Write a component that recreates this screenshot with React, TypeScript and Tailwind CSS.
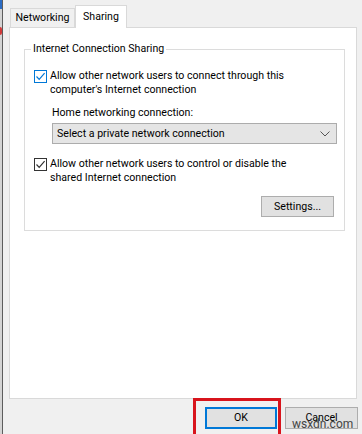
import React from 'react';

const font = { fontFamily: 'Roboto, "Liberation Sans", Arial, sans-serif' };

const CheckBox: React.FC<{ focused?: boolean }> = ({ focused }) => (
  <span
    className={`w-[13px] h-[13px] shrink-0 border bg-white flex items-center justify-center ${
      focused ? 'border-[#0078d7]' : 'border-[#333333]'
    }`}
  >
    <svg width="11" height="11" viewBox="0 0 11 11" fill="none">
      <path
        d="M1.5 5.5 L4.2 8.3 L9.6 2.2"
        stroke={focused ? '#0078d7' : '#333333'}
        strokeWidth="1.2"
      />
    </svg>
  </span>
);

const App: React.FC = () => {
  return (
    <div
      className="relative w-[362px] h-[434px] overflow-hidden bg-[#f0f0f0] text-[10.6px] text-black flex"
      style={font}
    >
      {/* edge of the window behind */}
      <div className="w-[2px] flex flex-col bg-[#d4d4d4]">
        <div className="h-[9px] bg-[#2b6cc4]" />
        <div className="h-[18px]" />
        <div className="h-[8px] bg-[#d23a3a] rounded-r-full" />
      </div>
      <div className="w-px bg-[#5d5d5d]" />

      <div className="flex-1 flex flex-col pl-[6px] pr-[5px]">
        {/* tabs */}
        <div className="relative z-10 flex items-end h-[28px] pl-px -mb-px">
          <div className="h-[19px] w-[65px] mb-px border border-b-0 border-[#d9d9d9] bg-[#f0f0f0] flex items-center justify-center">
            Networking
          </div>
          <div className="h-[23px] w-[52px] border border-b-0 border-[#d9d9d9] bg-white flex items-start justify-center pt-[3px]">
            Sharing
          </div>
        </div>

        {/* panel */}
        <div className="h-[372px] border border-[#d9d9d9] bg-white pt-[21px] pl-[14px] pr-[11px]">
          <div className="relative border border-[#dcdcdc] h-[182px] pt-[20px] pl-[9px] pr-[7px]">
            <span className="absolute -top-[8px] left-[6px] bg-white px-[2px] leading-[14px]">
              Internet Connection Sharing
            </span>

            <div className="flex gap-[3px]">
              <CheckBox focused />
              <div className="leading-[14px] -mt-px">
                Allow other network users to connect through this
                <br />
                computer's Internet connection
              </div>
            </div>

            <div className="pl-[18px] mt-[9px]">
              <div className="leading-[14px]">Home networking connection:</div>
              <div className="mt-[3px] h-[21px] border border-[#acacac] bg-[#e5e5e5] flex items-center justify-between pl-[4px] pr-[6px]">
                <span>Select a private network connection</span>
                <svg width="10" height="6" viewBox="0 0 10 6" fill="none">
                  <path d="M0.5 0.5 L5 5 L9.5 0.5" stroke="#555555" strokeWidth="1" />
                </svg>
              </div>
            </div>

            <div className="flex gap-[3px] mt-[14px]">
              <CheckBox />
              <div className="leading-[14px] -mt-px">
                Allow other network users to control or disable the
                <br />
                shared Internet connection
              </div>
            </div>

            <div className="flex justify-end mt-[11px] pr-[3px]">
              <button className="w-[73px] h-[21px] border border-[#adadad] bg-[#e1e1e1] flex items-center justify-center">
                Settings...
              </button>
            </div>
          </div>
        </div>

        {/* dialog buttons */}
        <div className="flex justify-end gap-[8px] pt-[8px] -mr-[1px]">
          <button className="w-[72px] h-[22px] border-2 border-[#0078d7] bg-[#e1e1e1] flex items-center justify-center">
            OK
          </button>
          <button className="relative w-[73px] h-[22px] border border-[#adadad] bg-[#e1e1e1] flex items-center justify-center">
            Cancel
            <span className="absolute left-[6px] top-[10px] text-[12px] text-[#444444] leading-none">wsxdn.com</span>
          </button>
        </div>
      </div>

      {/* red annotation around OK */}
      <div className="absolute left-[193px] top-[398px] w-[88px] h-[40px] border-[3px] border-[#d8141c]" />
    </div>
  );
};

export default App;
